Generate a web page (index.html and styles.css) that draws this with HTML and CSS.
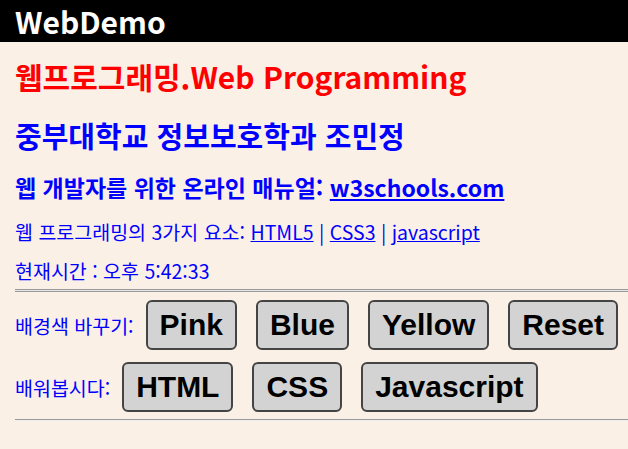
FILE: index.html
```html
<!DOCTYPE html>
<html lang="ko">
<head>
<meta charset="utf-8">
<title>WebDemo</title>
<link rel="stylesheet" href="styles.css">
</head>
<body>
<header class="topbar"><span class="brand">WebDemo</span></header>
<main class="content">
  <h1 class="title">웹프로그래밍.Web Programming</h1>
  <h2 class="subtitle">중부대학교 정보보호학과 조민정</h2>
  <h3 class="manual">웹 개발자를 위한 온라인 매뉴얼: <a href="#">w3schools.com</a></h3>
  <p class="line">웹 프로그래밍의 3가지 요소: <a href="#">HTML5</a> | <a href="#">CSS3</a> | <a href="#">javascript</a></p>
  <p class="line">현재시간 : 오후 5:42:33</p>
  <hr class="rule rule-top">
  <div class="row row-first">
    <span class="label">배경색 바꾸기:</span>
    <button class="btn">Pink</button>
    <button class="btn">Blue</button>
    <button class="btn">Yellow</button>
    <button class="btn">Reset</button>
  </div>
  <div class="row row-second">
    <span class="label">배워봅시다:</span>
    <button class="btn">HTML</button>
    <button class="btn">CSS</button>
    <button class="btn">Javascript</button>
  </div>
  <hr class="rule rule-bottom">
</main>
</body>
</html>
```
FILE: styles.css
```css
html, body {
  margin: 0;
  padding: 0;
  background: #faf0e6;
}
body {
  font-family: "Noto Sans CJK KR", "Noto Sans", sans-serif;
  color: #0000ff;
  overflow: hidden;
}
.topbar {
  background: #000;
  height: 42px;
  display: flex;
  align-items: center;
  padding-left: 15px;
}
.brand {
  color: #fff;
  font-weight: 700;
  font-size: 30px;
  line-height: 42px;
}
.content {
  padding-left: 15px;
}
.title {
  margin: 14px 0 0;
  color: #ff0000;
  font-size: 30px;
  line-height: 40px;
  font-weight: 700;
}
.subtitle {
  margin: 20px 0 0;
  font-size: 29px;
  line-height: 38px;
  font-weight: 700;
}
.manual {
  margin: 18px 0 0;
  font-size: 23px;
  line-height: 31px;
  font-weight: 700;
}
.line {
  margin: 15px 0 0;
  font-size: 19.5px;
  line-height: 27px;
}
.line + .line {
  margin-top: 12px;
}
a {
  color: #0000ff;
}
.rule {
  margin: 0;
  border: 0;
  height: 0;
}
.rule-top {
  margin-top: 5px;
  border-top: 1px solid #9a9a9a;
  border-bottom: 1px solid #9a9a9a;
  height: 1px;
  background: #e6e6e6;
}
.rule-bottom {
  margin-top: 7px;
  border-top: 1px solid #9a9a9a;
  border-bottom: 1px solid #eeeeee;
}
.row {
  display: flex;
  align-items: center;
  gap: 19px;
}
.row-first {
  margin-top: 8px;
}
.row-second {
  margin-top: 12px;
}
.label {
  font-size: 19.5px;
  margin-right: -7px;
}
.btn {
  font-family: "Liberation Sans", Arial, sans-serif;
  font-weight: 700;
  font-size: 30px;
  color: #000;
  background: #d3d3d3;
  border: 2px solid #444;
  border-radius: 6px;
  height: 50px;
  padding: 0 12px;
  margin: 0;
}
```
